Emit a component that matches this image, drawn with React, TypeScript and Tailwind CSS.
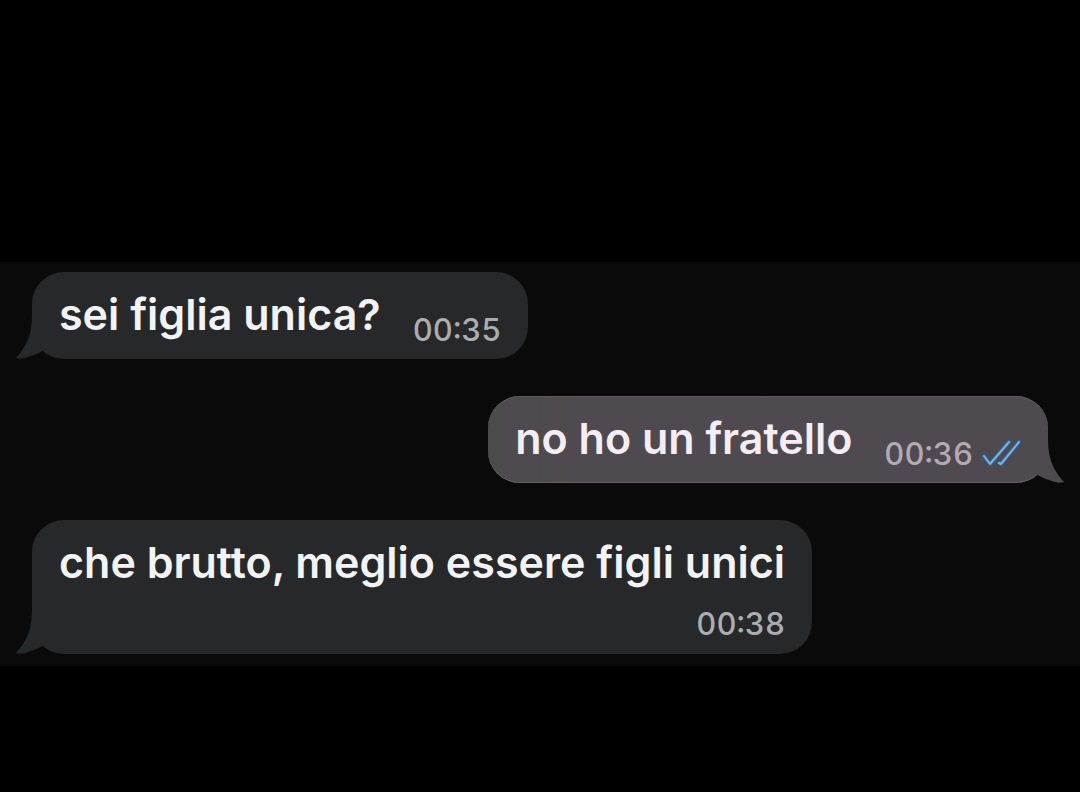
import clsx from "clsx";

interface Message {
  id: number;
  text: string;
  time: string;
  mine?: boolean;
  stacked?: boolean;
}

const messages: Message[] = [
  { id: 1, text: "sei figlia unica?", time: "00:35" },
  { id: 2, text: "no ho un fratello", time: "00:36", mine: true },
  { id: 3, text: "che brutto, meglio essere figli unici", time: "00:38", stacked: true },
];

function Tail({ mine }: { mine?: boolean }) {
  return (
    <svg
      viewBox="0 0 40 48"
      aria-hidden="true"
      className={clsx(
        "absolute bottom-0 h-12 w-10",
        mine ? "-right-4 -scale-x-100 text-[#4f4a4f]" : "-left-4 text-[#262829]"
      )}
    >
      <path
        d="M16 0 C16 20 14 31 0 47 C2 48 8 48 12 46 C17 44 22 43 26 40 L40 28 V0 Z"
        fill="currentColor"
      />
    </svg>
  );
}

function ReadTicks() {
  return (
    <svg
      viewBox="0 0 40 28"
      role="img"
      aria-label="Read"
      className="h-7 w-10"
      fill="none"
      strokeLinecap="round"
      strokeLinejoin="round"
    >
      <g stroke="#2a679a" strokeWidth="4">
        <path d="M3 16 L9 24 L28 2" />
        <path d="M18 23 L20 24 L38 2" />
      </g>
      <g stroke="#7db4de" strokeWidth="2">
        <path d="M3 16 L9 24 L28 2" />
        <path d="M18 23 L20 24 L38 2" />
      </g>
    </svg>
  );
}

function Bubble({ message }: { message: Message }) {
  const { text, time, mine, stacked } = message;
  return (
    <li
      className={clsx(
        "relative flex max-w-full rounded-[32px] px-[27px] pt-4",
        stacked ? "flex-col pb-3" : "gap-8 pb-[11px]",
        mine
          ? "self-end bg-linear-to-r from-[#4b4b4c] to-[#4f4a4f] to-15% shadow-[inset_0_1px_0_#5e595e,inset_0_-1px_0_#666166]"
          : "self-start bg-[#262829]"
      )}
    >
      <Tail mine={mine} />
      <p
        className={clsx(
          "relative text-[43px] leading-[52px] font-semibold",
          mine ? "text-[#f4edf4]" : "text-[#f2f3f5]",
          !stacked && "mb-2"
        )}
      >
        {text}
      </p>
      <div
        className={clsx(
          "relative flex items-center gap-2 self-end text-[31px] leading-9 font-medium tabular-nums",
          stacked && "mt-[18px]",
          mine ? "text-[#b3abb2]" : "text-[#acadae]"
        )}
      >
        <time>{time}</time>
        {mine && <ReadTicks />}
      </div>
    </li>
  );
}

export default function App() {
  return (
    <div className="flex min-h-screen flex-col bg-black pt-[262px] font-['Inter',sans-serif]">
      <main className="bg-[#0a0a0b] px-8 pt-2.5 pb-3">
        <ul className="flex flex-col gap-[37px]">
          {messages.map((message) => (
            <Bubble key={message.id} message={message} />
          ))}
        </ul>
      </main>
    </div>
  );
}
